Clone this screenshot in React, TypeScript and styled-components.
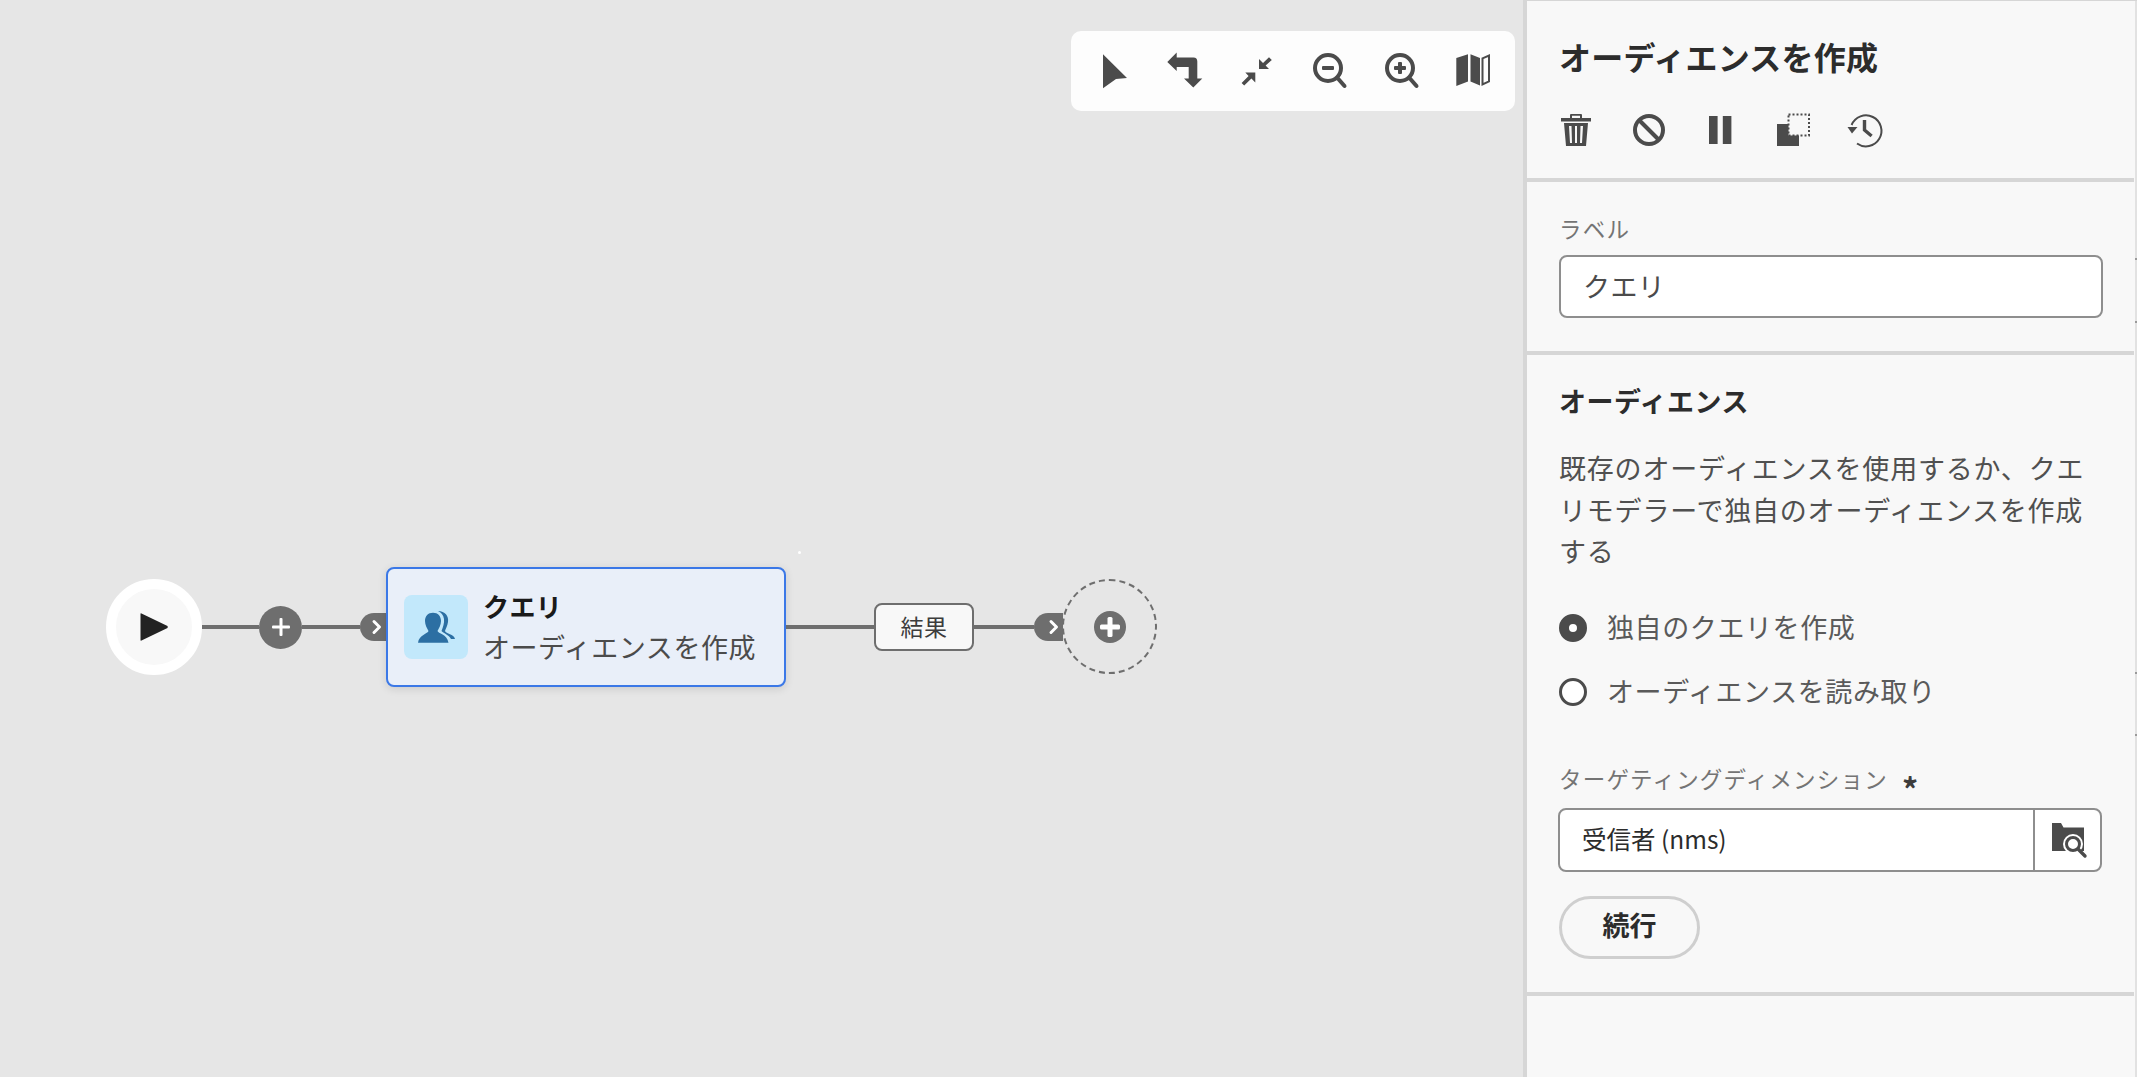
import React from "react";
import styled, { createGlobalStyle } from "styled-components";

const Global = createGlobalStyle`
  html, body { margin: 0; padding: 0; height: 100%; }
  body { font-family: "Noto Sans CJK JP", "Noto Sans", sans-serif; overflow: hidden; }
`;

const Page = styled.div`
  display: flex;
  width: 2137px;
  height: 1077px;
  background: #e6e6e6;
  overflow: hidden;
`;

const Canvas = styled.main`
  position: relative;
  flex: 1;
`;

const Toolbar = styled.div`
  position: absolute;
  top: 31px;
  left: 1071px;
  width: 444px;
  height: 80px;
  box-sizing: border-box;
  padding-left: 22px;
  display: flex;
  align-items: center;
  gap: 32px;
  background: #fdfdfd;
  border-radius: 10px;
`;

const Svg = styled.svg`
  display: block;
  width: 40px;
  height: 40px;
  flex: none;
  fill: #4b4b4b;
`;

const Flow = styled.div`
  position: absolute;
  left: 106px;
  top: 579px;
  height: 96px;
  display: flex;
  align-items: center;
`;

const Start = styled.div`
  width: 96px;
  height: 96px;
  box-sizing: border-box;
  border: 10px solid #fff;
  border-radius: 50%;
  background: #f8f8f8;
  display: flex;
  align-items: center;
  justify-content: center;
  flex: none;
`;

const Line = styled.div<{ $w: number }>`
  width: ${(p) => p.$w}px;
  height: 4px;
  background: #6e6e6e;
  flex: none;
`;

const PlusDot = styled.div`
  width: 43px;
  height: 43px;
  border-radius: 50%;
  background: #6e6e6e;
  display: flex;
  align-items: center;
  justify-content: center;
  flex: none;
`;

const Tab = styled.div<{ $w: number }>`
  width: ${(p) => p.$w}px;
  height: 28px;
  background: #6e6e6e;
  border-radius: 14px 0 0 14px;
  display: flex;
  align-items: center;
  justify-content: flex-end;
  padding-right: 3px;
  box-sizing: border-box;
  flex: none;
`;

const Node = styled.div`
  width: 400px;
  height: 120px;
  box-sizing: border-box;
  border: 2px solid #3b78e7;
  border-radius: 8px;
  background: #e9eff9;
  box-shadow: 0 2px 8px rgba(0, 0, 0, 0.12);
  padding: 0 0 0 16px;
  display: flex;
  align-items: center;
  gap: 15px;
  flex: none;
`;

const NodeIcon = styled.div`
  width: 64px;
  height: 64px;
  border-radius: 8px;
  background: #c2e8fb;
  display: flex;
  align-items: center;
  justify-content: center;
  flex: none;
`;

const NodeText = styled.div`
  display: flex;
  flex-direction: column;
  margin-top: -2px;
`;

const NodeTitle = styled.div`
  font-size: 26px;
  line-height: 41px;
  font-weight: 700;
  letter-spacing: 0.4px;
  color: #1a1a1a;
`;

const NodeSub = styled.div`
  font-size: 27px;
  line-height: 41px;
  letter-spacing: 0.55px;
  color: #4b4b4b;
  white-space: nowrap;
`;

const Result = styled.div`
  width: 100px;
  height: 48px;
  box-sizing: border-box;
  border: 2px solid #6e6e6e;
  border-radius: 8px;
  background: #f8f8f8;
  display: flex;
  align-items: center;
  justify-content: center;
  font-size: 23px;
  letter-spacing: 0.4px;
  color: #3c3c3c;
  padding-bottom: 2px;
  flex: none;
`;

const Dropzone = styled.div`
  width: 95px;
  height: 95px;
  margin: -1px 0 0 -1px;
  box-sizing: border-box;
  border: 2px dashed #6e6e6e;
  border-radius: 50%;
  display: flex;
  align-items: center;
  justify-content: center;
  flex: none;
`;

const Speck = styled.div`
  position: absolute;
  left: 798px;
  top: 551px;
  width: 3px;
  height: 3px;
  background: #fff;
  border-radius: 50%;
`;

const Panel = styled.aside`
  position: relative;
  width: 614px;
  flex: none;
  height: 100%;
  box-sizing: border-box;
  background: #f8f8f8;
  border-left: 4px solid #d6d6d6;
  border-top: 1px solid #d6d6d6;
  display: flex;
`;

const PanelBody = styled.div`
  width: 607px;
  flex: none;
`;

const Rail = styled.div`
  margin-left: 1px;
  width: 2px;
  background: #e2e2e2;
  flex: none;
  display: flex;
  flex-direction: column;
`;

const RailTick = styled.div<{ $top: number }>`
  width: 2px;
  height: 2px;
  background: #9a9a9a;
  margin-top: ${(p) => p.$top}px;
`;

const Section = styled.section<{ $h: number }>`
  display: flow-root;
  box-sizing: border-box;
  height: ${(p) => p.$h}px;
  border-bottom: 4px solid #d6d6d6;
  padding: 0 31px 0 32px;
`;

const PanelTitle = styled.h1`
  margin: 35px 0 0;
  font-size: 32px;
  line-height: 40px;
  font-weight: 700;
  color: #2c2c2c;
  letter-spacing: 0.2px;
`;

const Actions = styled.div`
  margin: 34px 0 0 -3px;
  display: flex;
  gap: 32px;
`;

const FieldLabel = styled.label<{ $top: number }>`
  display: flex;
  align-items: center;
  gap: 14px;
  margin-top: ${(p) => p.$top}px;
  font-size: 22.5px;
  line-height: 30px;
  letter-spacing: 1.2px;
  color: #747474;
`;

const Star = styled.span`
  color: #3c3c3c;
  font-size: 32px;
  font-weight: 700;
  line-height: 30px;
  height: 30px;
  padding-top: 10px;
  box-sizing: border-box;
`;

const TextBox = styled.div`
  margin-top: 12px;
  height: 63px;
  box-sizing: border-box;
  border: 2px solid #8e8e8e;
  border-radius: 8px;
  background: #fff;
  display: flex;
  align-items: center;
  padding: 0 0 2px 22px;
  font-size: 27px;
  letter-spacing: 0.4px;
  color: #4b4b4b;
`;

const Heading = styled.h2`
  margin: 28px 0 0;
  font-size: 27px;
  line-height: 36px;
  font-weight: 700;
  letter-spacing: 0.5px;
  color: #2c2c2c;
`;

const Description = styled.p`
  margin: 28px 0 0;
  font-size: 27px;
  line-height: 41.5px;
  letter-spacing: 0.8px;
  color: #505050;
`;

const RadioGroup = styled.div`
  margin-top: 32px;
  display: flex;
  flex-direction: column;
  gap: 16px;
`;

const RadioRow = styled.div`
  height: 48px;
  display: flex;
  align-items: center;
  gap: 20px;
  padding-bottom: 2px;
  box-sizing: border-box;
  font-size: 27px;
  letter-spacing: 0.6px;
  color: #5a5a5a;
`;

const RadioDot = styled.span<{ $on?: boolean }>`
  width: 28px;
  height: 28px;
  margin-bottom: -2px;
  box-sizing: border-box;
  border-radius: 50%;
  background: #fff;
  border: ${(p) => (p.$on ? "10px" : "3px")} solid #4b4b4b;
  flex: none;
`;

const Picker = styled.div`
  margin-top: 15px;
  margin-left: -1px;
  width: 544px;
  height: 64px;
  box-sizing: border-box;
  border: 2px solid #8e8e8e;
  border-radius: 8px;
  background: #fff;
  display: flex;
  align-items: stretch;
`;

const PickerValue = styled.div`
  flex: 1;
  display: flex;
  align-items: center;
  padding-left: 22px;
  padding-bottom: 2px;
  font-size: 24.5px;
  color: #2c2c2c;
`;

const PickerButton = styled.div`
  width: 65px;
  border-left: 2px solid #8e8e8e;
  display: flex;
  align-items: center;
  justify-content: center;
`;

const ContinueButton = styled.button`
  display: block;
  margin-top: 24px;
  width: 141px;
  height: 63px;
  box-sizing: border-box;
  border: 3px solid #cfcfcf;
  border-radius: 32px;
  background: transparent;
  font-family: inherit;
  font-size: 27px;
  font-weight: 700;
  color: #2c2c2c;
  padding: 0 0 6px;
`;

const Plus = ({ s = 18, t = 3 }: { s?: number; t?: number }) => (
  <svg width={s} height={s} viewBox={`0 0 ${s} ${s}`} fill="#fff">
    <rect x={0} y={(s - t) / 2} width={s} height={t} rx={1} />
    <rect x={(s - t) / 2} y={0} width={t} height={s} rx={1} />
  </svg>
);

const Chevron = () => (
  <svg width="12" height="16" viewBox="0 0 12 16" fill="none" stroke="#fff" strokeWidth="3" strokeLinecap="round" strokeLinejoin="round">
    <path d="M3 2.5 L8.5 8 L3 13.5" />
  </svg>
);

const I = ({ children }: { children: React.ReactNode }) => (
  <Svg viewBox="0 0 40 40">{children}</Svg>
);

const Magnifier = ({ plus }: { plus?: boolean }) => (
  <I>
    <circle cx="19" cy="17" r="13" fill="none" stroke="#4b4b4b" strokeWidth="4" />
    <path d="M28.5 27 L35.5 35" stroke="#4b4b4b" strokeWidth="4" strokeLinecap="round" />
    <rect x="13" y="15" width="12" height="4" rx="1" />
    {plus && <rect x="17" y="11" width="4" height="12" rx="1" />}
  </I>
);

export default function App() {
  return (
    <Page>
      <Global />
      <Canvas>
        <Toolbar>
          <I><path d="M10 3.3 L34 27 L23 28 L10 37.3 Z" /></I>
          <I><path d="M2.3 11 L11.7 1.6 V6.6 H28.5 Q32.3 6.6 32.3 10.5 V27.6 H37.3 L28.3 36.6 L19 27.6 H23.7 V16 H11.7 V20 Z" /></I>
          <I>
            <path d="M22 8 V18 H32 L28.6 14.6 L34.8 9 L32 6.2 L26 12 Z" />
            <path d="M18.3 21.6 H8.3 L11.6 25 L4.6 32 L7.2 34.6 L14.4 27.6 L18.3 31.6 Z" />
          </I>
          <Magnifier />
          <Magnifier plus />
          <I>
            <path d="M3.3 7 L15 3.3 V30.5 L3.3 35 Z" />
            <path d="M17.5 3.3 L27 7 V34.6 L17.5 30.5 Z" />
            <path d="M29.5 7.4 L36 4.6 V30.4 L29.5 33.4 Z" fill="none" stroke="#4b4b4b" strokeWidth="2" />
          </I>
        </Toolbar>

        <Flow>
          <Start>
            <svg width="28" height="28" viewBox="0 0 28 28"><path d="M0.5 1 Q0.5 0 1.5 0.5 L27.5 13 Q28 14 27.5 15 L1.5 27.5 Q0.5 28 0.5 27 Z" fill="#222" /></svg>
          </Start>
          <Line $w={57} />
          <PlusDot><Plus s={18} t={3} /></PlusDot>
          <Line $w={58} />
          <Tab $w={26}><Chevron /></Tab>
          <Node>
            <NodeIcon>
              <svg width="37" height="32" viewBox="0 0 37 32" fill="#2c6fa3">
                <path d="M20 0 C27 0 31 5 30 11 C29.5 15 27.5 18 27 20 C28 23 36 23 37 28 L33 28 C31 24 25 22 23.5 20 C25 16 26.5 12 26 8 C25.5 4 23 1.5 20 0 Z" />
                <path d="M15 1.7 C20 1.7 23 5 23 10 C23 14 21 17 19.5 20 C20 22.5 29 23 30.5 31.7 L0 31.7 C1 24 10 22.5 10.5 20 C9 17 7 14 7 10 C7 5 10 1.7 15 1.7 Z" />
              </svg>
            </NodeIcon>
            <NodeText>
              <NodeTitle>クエリ</NodeTitle>
              <NodeSub>オーディエンスを作成</NodeSub>
            </NodeText>
          </Node>
          <Line $w={88} />
          <Result>結果</Result>
          <Line $w={60} />
          <Tab $w={29}><Chevron /></Tab>
          <Dropzone>
            <svg width="32" height="32" viewBox="0 0 32 32">
              <circle cx="16" cy="16" r="16" fill="#6e6e6e" />
              <rect x="6" y="13.5" width="20" height="5" rx="1.5" fill="#fff" />
              <rect x="13.5" y="6" width="5" height="20" rx="1.5" fill="#fff" />
            </svg>
          </Dropzone>
        </Flow>
        <Speck />
      </Canvas>

      <Panel>
        <PanelBody>
          <Section $h={181}>
            <PanelTitle>オーディエンスを作成</PanelTitle>
            <Actions>
              <I>
                <path fillRule="evenodd" d="M14 5 Q14 4 15 4 H25 Q26 4 26 5 V8 H35 V11.5 H5 V8 H14 Z M16 5.8 V8 H24 V5.8 Z" />
                <path fillRule="evenodd" d="M8 13 H32 L30 36 H10 Z M13 16 L14 33 H16 L15.5 16 Z M19 16 V33 H21 V16 Z M24.5 16 L24 33 H26 L27 16 Z" />
              </I>
              <I>
                <circle cx="21" cy="20" r="14" fill="none" stroke="#4b4b4b" strokeWidth="4" />
                <path d="M11 10 L31 30" stroke="#4b4b4b" strokeWidth="4" />
              </I>
              <I>
                <rect x="9" y="6" width="8.6" height="28" />
                <rect x="22.8" y="6" width="8.6" height="28" />
              </I>
              <I>
                <rect x="5" y="14" width="22" height="22" />
                <rect x="16.5" y="4.5" width="20.5" height="21" fill="#f8f8f8" stroke="#4b4b4b" strokeWidth="2" strokeDasharray="2 2" />
              </I>
              <I>
                <path d="M7.6 15 A15.5 15.5 0 1 1 13 33.5" fill="none" stroke="#4b4b4b" strokeWidth="2" />
                <path d="M3.5 17 H13.5 L8 23.5 Z" />
                <path d="M20.5 10 V20 L27.6 26" fill="none" stroke="#4b4b4b" strokeWidth="3.4" />
              </I>
            </Actions>
          </Section>
          <Section $h={173}>
            <FieldLabel $top={31}>ラベル</FieldLabel>
            <TextBox>クエリ</TextBox>
          </Section>
          <Section $h={641}>
            <Heading>オーディエンス</Heading>
            <Description>既存のオーディエンスを使用するか、クエリモデラーで独自のオーディエンスを作成する</Description>
            <RadioGroup>
              <RadioRow><RadioDot $on />独自のクエリを作成</RadioRow>
              <RadioRow><RadioDot />オーディエンスを読み取り</RadioRow>
            </RadioGroup>
            <FieldLabel $top={47}>ターゲティングディメンション<Star>*</Star></FieldLabel>
            <Picker>
              <PickerValue>受信者 (nms)</PickerValue>
              <PickerButton>
                <I>
                  <path d="M4 3 H13 L15.5 7.5 H36 V31 H4 Z" />
                  <circle cx="25" cy="24" r="10" fill="#fff" />
                  <circle cx="25" cy="24" r="6.5" fill="#fff" stroke="#4b4b4b" strokeWidth="3" />
                  <path d="M30 29 L37 36" stroke="#4b4b4b" strokeWidth="3.4" strokeLinecap="round" />
                </I>
              </PickerButton>
            </Picker>
            <ContinueButton>続行</ContinueButton>
          </Section>
        </PanelBody>
        <Rail>
          <RailTick $top={257} />
          <RailTick $top={61} />
          <RailTick $top={349} />
          <RailTick $top={60} />
        </Rail>
      </Panel>
    </Page>
  );
}
